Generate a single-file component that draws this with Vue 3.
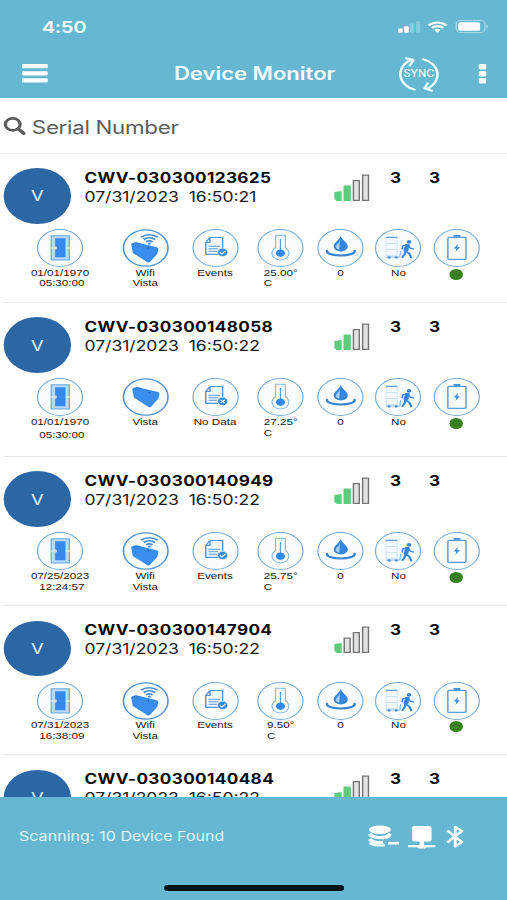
<script setup>
const devices = [
  { serial: 'CWV-030300123625', seen: '07/31/2023  16:50:21', bars: 2, date: '01/01/1970', time: '05:30:00', wifi: true, events: true, temp: '25.00°' },
  { serial: 'CWV-030300148058', seen: '07/31/2023  16:50:22', bars: 2, date: '01/01/1970', time: '05:30:00', wifi: false, events: false, temp: '27.25°' },
  { serial: 'CWV-030300140949', seen: '07/31/2023  16:50:22', bars: 2, date: '07/25/2023', time: '12:24:57', wifi: true, events: true, temp: '25.75°' },
  { serial: 'CWV-030300147904', seen: '07/31/2023  16:50:22', bars: 1, date: '07/31/2023', time: '16:38:09', wifi: true, events: true, temp: '9.50°' },
  { serial: 'CWV-030300140484', seen: '07/31/2023  16:50:22', bars: 2 },
]
const barTops = [17, 11.5, 6, 0.5]
</script>

<template>
  <div class="viewport">
    <div class="phone">
      <header class="top">
        <div class="status">
          <span class="clock">4:50</span>
          <svg class="cell" viewBox="0 0 19 12">
            <rect x="0" y="7.5" width="4" height="4.5" rx="1" fill="#fff" />
            <rect x="5" y="5.3" width="4" height="6.7" rx="1" fill="#fff" />
            <rect x="10" y="2.5" width="3.6" height="9.5" rx="1" fill="#86cbe0" />
            <rect x="15" y="0" width="3.6" height="12" rx="1" fill="#86cbe0" />
          </svg>
          <svg class="wifi" viewBox="0 0 17 12" fill="none" stroke="#fff" stroke-width="2.1">
            <path d="M1 4.4a10.6 10.6 0 0 1 15 0M3.7 7.1a6.8 6.8 0 0 1 9.6 0" />
            <path d="M8.5 11.8L5.9 9.2a3.7 3.7 0 0 1 5.2 0z" fill="#fff" stroke="none" />
          </svg>
          <svg class="battery" viewBox="0 0 27 13">
            <rect x=".5" y=".5" width="23.5" height="12" rx="3.6" fill="none" stroke="#a5d9e8" />
            <rect x="2.2" y="2.2" width="17.8" height="8.6" rx="1.6" fill="#fff" />
            <path d="M25.3 4.5c1.6.6 1.6 3.4 0 4z" fill="#a5d9e8" />
          </svg>
        </div>
        <div class="nav">
          <svg class="menu" viewBox="0 0 21 19" fill="#fff">
            <rect width="21" height="4.2" rx=".8" /><rect y="7.2" width="21" height="4.2" rx=".8" /><rect y="14.3" width="21" height="4.2" rx=".8" />
          </svg>
          <h1>Device Monitor</h1>
          <svg class="sync" viewBox="0 0 34 36" fill="none" stroke="#f2fdff" stroke-width="2" stroke-linecap="round" stroke-linejoin="round">
            <path d="M13.6 33.6A16 16 0 0 1 10.5 4M6.7 2.3l6 1.700-3 5.500M20.500 3.200A16 16 0 0 1 23.200 33M27.600 34.600l-6-2.200 2.600-5" />
            <text x="17" y="21.2" text-anchor="middle" textLength="25" lengthAdjust="spacingAndGlyphs">SYNC</text>
          </svg>
          <svg class="more" viewBox="0 0 6 20" fill="#fff">
            <rect width="6" height="5.5" rx="1.2" /><rect y="7" width="6" height="5.5" rx="1.2" /><rect y="14" width="6" height="5.5" rx="1.2" />
          </svg>
        </div>
      </header>

      <div class="search">
        <svg viewBox="0 0 18 18" fill="none" stroke="#5a5a5a">
          <circle cx="7.4" cy="7.4" r="6" stroke-width="2.6" />
          <path d="M11.8 11.8l4.600 4.600" stroke-width="3" stroke-linecap="round" />
        </svg>
        <span>Serial Number</span>
      </div>

      <main class="list">
        <section v-for="d in devices" :key="d.serial" class="device" :class="{ loose: d.wifi === false }">
          <div class="head">
            <div class="avatar">V</div>
            <div class="names">
              <div class="serial">{{ d.serial }}</div>
              <div class="seen">{{ d.seen }}</div>
            </div>
            <svg class="bars" viewBox="0 0 30 27">
              <template v-for="(top, i) in barTops" :key="i">
                <path v-if="i === 0" :d="`M0 ${top + 1}L6 ${top}V27H2L0 25z`" fill="#5ecb7e" />
                <rect v-else-if="i < d.bars" :x="i * 7.5" :y="top" width="6" :height="27 - top" rx=".5" fill="#5ecb7e" />
                <rect v-else :x="i * 7.5 + .6" :y="top + .6" width="4.8" :height="25.8 - top" fill="#e2e2e2" stroke="#747474" stroke-width="1.2" />
              </template>
            </svg>
            <b class="count">3</b>
            <b class="count">3</b>
          </div>

          <div v-if="d.date" class="facts">
            <div class="fact">
              <svg class="ring" viewBox="0 0 38 38">
                <circle class="rim" cx="19" cy="19" r="18.4" />
                <rect x="11.8" y="6.8" width="14.8" height="24.2" fill="#b9dafa" stroke="#5f9fe0" stroke-width=".9" />
                <path d="M15 9.2h8.5v19H15v-7.500a1.700 1.700 0 0 0 0-3.400z" fill="#3989eb" />
                <path d="M11 19h4M23.5 19h3.8" stroke="#eaf5ff" stroke-width="1.2" />
              </svg>
              <span>{{ d.date }}</span><span class="time">{{ d.time }}</span>
            </div>
            <div class="fact">
              <svg class="ring" viewBox="0 0 38 38">
                <circle class="rim strong" cx="19" cy="19" r="18.2" />
                <template v-if="d.wifi">
                  <path d="M15.200 8.100a11 11 0 0 1 13.600 0M17.300 10.500a7.600 7.600 0 0 1 9.400 0M19.400 12.800a4.200 4.200 0 0 1 5.200 0" fill="none" stroke="#4a8dd6" stroke-width="1.7" />
                  <circle cx="22" cy="14.600" r="1.2" fill="#4a8dd6" />
                </template>
                <g :transform="d.wifi ? 'translate(-.9 4.3)' : ''">
                  <path d="M8 10.9q.4-1.2 4-2l17 5q1.800.7 1.100 2.400l-.7 4.200-6.100 8.200q-.8 1-2 .3L9.300 19.600z" fill="#398dec" />
                  <path d="M8 10.900q.4-1.200 4-2l4 1.200-2 1.100z" fill="#286fc6" opacity=".45" />
                  <circle cx="22" cy="14.600" r=".8" fill="#245faf" />
                </g>
              </svg>
              <span v-if="d.wifi">Wifi</span><span>Vista</span>
            </div>
            <div class="fact">
              <svg class="ring" viewBox="0 0 38 38">
                <circle class="rim" cx="19" cy="19" r="18.4" />
                <path d="M14.5 8.500h10.300v16.800H11V13.300zM14.500 8.500v4.800H11" fill="#edf7ff" stroke="#5a98de" stroke-width="1.2" stroke-linejoin="round" />
                <path d="M13.2 17.300h9.500M13.200 19.800h7.800M13.200 22.300h6.800" stroke="#5b9ae0" stroke-width="1" />
                <circle cx="24.8" cy="23.400" r="4.200" fill="#398ae3" stroke="#fff" stroke-width=".6" />
                <path v-if="d.events" d="M22.600 23.400l1.600 1.600 2.900-3.200" fill="none" stroke="#fff" stroke-width="1" />
                <path v-else d="M23.200 21.800l3.200 3.200M26.400 21.800L23.200 25" stroke="#fff" stroke-width="1" />
              </svg>
              <span>{{ d.events ? 'Events' : 'No Data' }}</span>
            </div>
            <div class="fact">
              <svg class="ring" viewBox="0 0 38 38">
                <circle class="rim" cx="19" cy="19" r="18.4" />
                <path d="M15 6.300h8v12.200a6.900 6.900 0 1 1-8 0z" fill="#f7fcff" stroke="#8bbaeb" stroke-width="1" />
                <path d="M19 10v11" stroke="#5d9ce1" stroke-width="1" />
                <circle cx="19" cy="24.200" r="3.700" fill="#348ae9" />
              </svg>
              <span>{{ d.temp }}<br />C</span>
            </div>
            <div class="fact">
              <svg class="ring" viewBox="0 0 38 38">
                <circle class="rim" cx="19" cy="19" r="18.4" />
                <path d="M19.200 7.300c1.800 4.600 5.800 6.400 5.800 10.200a5.700 5 0 0 1-11.500 0c0-3.800 4-5.600 5.700-10.200z" fill="#3685df" />
                <path d="M18.800 10.500c-.6 4-3.600 5-3.600 7.200 0 1.300 1 2.600 2.800 3z" fill="#a6cff5" />
                <path d="M8 21.700c-1 6.400 23.600 6.400 22.600 0" fill="none" stroke="#3a82d2" stroke-width="2" stroke-linecap="round" />
              </svg>
              <span>0</span>
            </div>
            <div class="fact">
              <svg class="ring" viewBox="0 0 38 38">
                <circle class="rim" cx="19" cy="19" r="18.4" />
                <path d="M9.300 8.300h9v18.300h-9zM9.300 14.500h9M9.300 20.500h9" fill="#f4faff" stroke="#c8dff4" stroke-width=".8" />
                <path d="M9 8.400h9.500" stroke="#679fd9" stroke-width="1.3" />
                <path d="M9 28h11.500l.7-6" fill="none" stroke="#8ab8e8" stroke-width="1" />
                <circle cx="11.700" cy="28.400" r="1.200" fill="#4b8fda" /><circle cx="17.500" cy="28.400" r="1.200" fill="#4b8fda" />
                <circle cx="28" cy="12.800" r="1.900" fill="#3584df" />
                <path d="M26.300 15.500l-1.600 6.300 3.400 2.600 2 4.800M25.200 21.500l-.9 4-2 3.200" fill="none" stroke="#3685e0" stroke-width="1.8" stroke-linejoin="round" />
                <path d="M25.400 15.400l2.400.1-.8 6.200-2.800-.5z" fill="#3685e0" stroke="#3685e0" />
                <path d="M25.800 15.800l-3 1.300-.5 3.300M27.500 16l1.400 3 3 1.200" fill="none" stroke="#3685e0" stroke-width="1.3" />
              </svg>
              <span>No</span>
            </div>
            <div class="fact">
              <svg class="ring" viewBox="0 0 38 38">
                <circle class="rim" cx="19" cy="19" r="18.4" />
                <rect x="11.700" y="8.400" width="14.800" height="22" rx="1" fill="#f5fbff" stroke="#619bda" stroke-width="1.2" />
                <rect x="16.300" y="6" width="5.600" height="1.900" fill="#4c8fd9" />
                <path d="M20 15l-3.600 4.400h2.300l-.7 3.400 3.500-4.500h-2.200z" fill="#3588e6" />
              </svg>
              <i class="dot"></i>
            </div>
          </div>
        </section>
      </main>

      <footer class="bottom">
        <div class="scan">
          <span>Scanning: 10 Device Found</span>
          <svg class="db" viewBox="0 0 25 22" fill="none" stroke="#fff" stroke-width="3.2">
            <ellipse cx="9.200" cy="4.800" rx="9" ry="4.200" fill="#fff" stroke="none" />
            <path d="M.8 8.800c2.600 5 14.200 5 16.800 0M.8 14.200c2 3.200 6.800 4.200 11 3.200" />
            <path d="M11 13.600c3.200-.2 5.600-1.400 6.600-2.800" stroke-width="1.6" />
            <path d="M.8 17.600c1.800 2.600 7.400 3.600 12.400 2.600" stroke-width="2" />
            <path d="M15.800 18.200h9" stroke-width="2.600" />
          </svg>
          <svg class="pc" viewBox="0 0 23 23" fill="#fff">
            <rect x="3.400" y="1" width="16" height="15.600" rx="2" />
            <path d="M9.700 16h3.600v4h9.200v2.200h-7.200l-1.300 1.200H9l-1.300-1.200H.3V20h9.400z" />
          </svg>
          <svg class="bt" viewBox="0 0 15 23" fill="none" stroke="#fff" stroke-width="2.300" stroke-linejoin="round">
            <path d="M1.200 5.500l12 11.500-5.500 4.300V1.800l5.500 4.300-12 11.200" />
          </svg>
        </div>
        <div class="home"></div>
      </footer>
    </div>
  </div>
</template>

<style>
body { margin: 0; background: #fff; overflow: hidden; }
</style>

<style scoped>
.viewport { width: 507px; height: 900px; overflow: hidden; }
.phone { width: 414px; height: 900px; display: flex; flex-direction: column; transform: scaleX(1.22464); transform-origin: 0 0; font-family: Inter, "Liberation Sans", sans-serif; background: #fff; color: #111; }
svg { display: block; flex: none; overflow: visible; }
.top { flex: none; height: 98px; background: #65b7d2; color: #f4feff; box-sizing: border-box; }
.status { height: 49px; padding: 4px 15.5px 0 34px; box-sizing: border-box; display: flex; align-items: center; }
.clock { flex: 1; font-size: 16.5px; font-weight: 600; letter-spacing: -.3px; }
.cell { width: 18.5px; height: 12px; margin-right: 6px; }
.wifi { width: 16.5px; height: 12px; margin-right: 6px; }
.battery { width: 27px; height: 13px; }
.nav { height: 49px; display: flex; align-items: center; padding: 0 17.5px 0 18px; }
.menu { width: 21px; height: 19px; }
h1 { margin: 0 0 0 103px; width: 183px; font-size: 18px; font-weight: 600; line-height: 24px; white-space: nowrap; }
.sync { width: 34px; height: 36px; margin-right: 31.5px; }
.sync text { font: 500 10px Inter, sans-serif; fill: #f2fdff; stroke: none; }
.more { width: 6px; height: 20px; }
.search { flex: none; height: 55.5px; box-sizing: border-box; padding: 4px 0 0 3px; display: flex; align-items: center; gap: 5px; border-bottom: 1.5px solid #e6e6e6; font-size: 18.3px; letter-spacing: -.26px; color: #5e5e5e; }
.search svg { width: 18px; height: 18px; margin-top: -2px; }
.list { flex: 1; min-height: 0; overflow: hidden; }
.device { height: 149.3px; box-sizing: border-box; margin-left: 3px; border-bottom: 1px solid #e7e7e7; }
.device.loose { height: 154px; }
.head { height: 75.5px; display: flex; align-items: flex-start; }
.avatar { width: 55px; height: 55.5px; margin-top: 14.5px; border-radius: 50%; background: #2b67a5; color: #e8f3fc; display: flex; align-items: center; justify-content: center; font-size: 15px; }
.names { margin: 15px 0 0 11px; width: 201.3px; white-space: pre; }
.serial { font-size: 14px; font-weight: 700; line-height: 18px; letter-spacing: .3px; color: #090909; }
.seen { font-size: 14.3px; line-height: 20px; letter-spacing: 0; color: #202020; }
.bars { width: 30px; height: 27px; margin: 20px 10.8px 0 3px; }
.count { width: 18px; margin: 15px 13.7px 0 0; text-align: center; line-height: 18px; font-size: 14px; color: #090909; }
.facts { margin-left: 13px; display: grid; grid-template-columns: 66px 73.2px 40.8px 66.4px 31.2px 63.6px 32px; }
.fact { display: flex; flex-direction: column; align-items: center; white-space: nowrap; font: 9.5px/10.7px "Liberation Sans", sans-serif; color: #1b1b1b; }
.ring { width: 38px; height: 38px; margin-bottom: .5px; }
.rim { fill: #f9fdff; stroke: #78abdc; stroke-width: 1; }
.rim.strong { stroke: #5393d5; stroke-width: 1.3; }
.time { padding-left: 3px; }
.loose .time { margin-top: 2.3px; }
.dot { width: 11px; height: 11px; margin: 1.3px 1px 0 0; border-radius: 50%; background: #38801f; }
.bottom { flex: none; height: 103.5px; box-sizing: border-box; background: #65b7d2; padding-top: 27px; display: flex; flex-direction: column; align-items: center; }
.scan { width: 100%; height: 25px; box-sizing: border-box; padding: 0 35px 0 15.5px; display: flex; align-items: center; color: #e1f5fa; font-size: 13px; letter-spacing: .07px; }
.scan span { flex: 1; white-space: nowrap; }
.db { width: 25px; height: 22px; margin-right: 7px; }
.pc { width: 23px; height: 23px; margin-right: 8.5px; }
.bt { width: 15px; height: 23px; }
.home { width: 147px; height: 6px; margin-top: 36.5px; border-radius: 3px; background: #071317; }
</style>
